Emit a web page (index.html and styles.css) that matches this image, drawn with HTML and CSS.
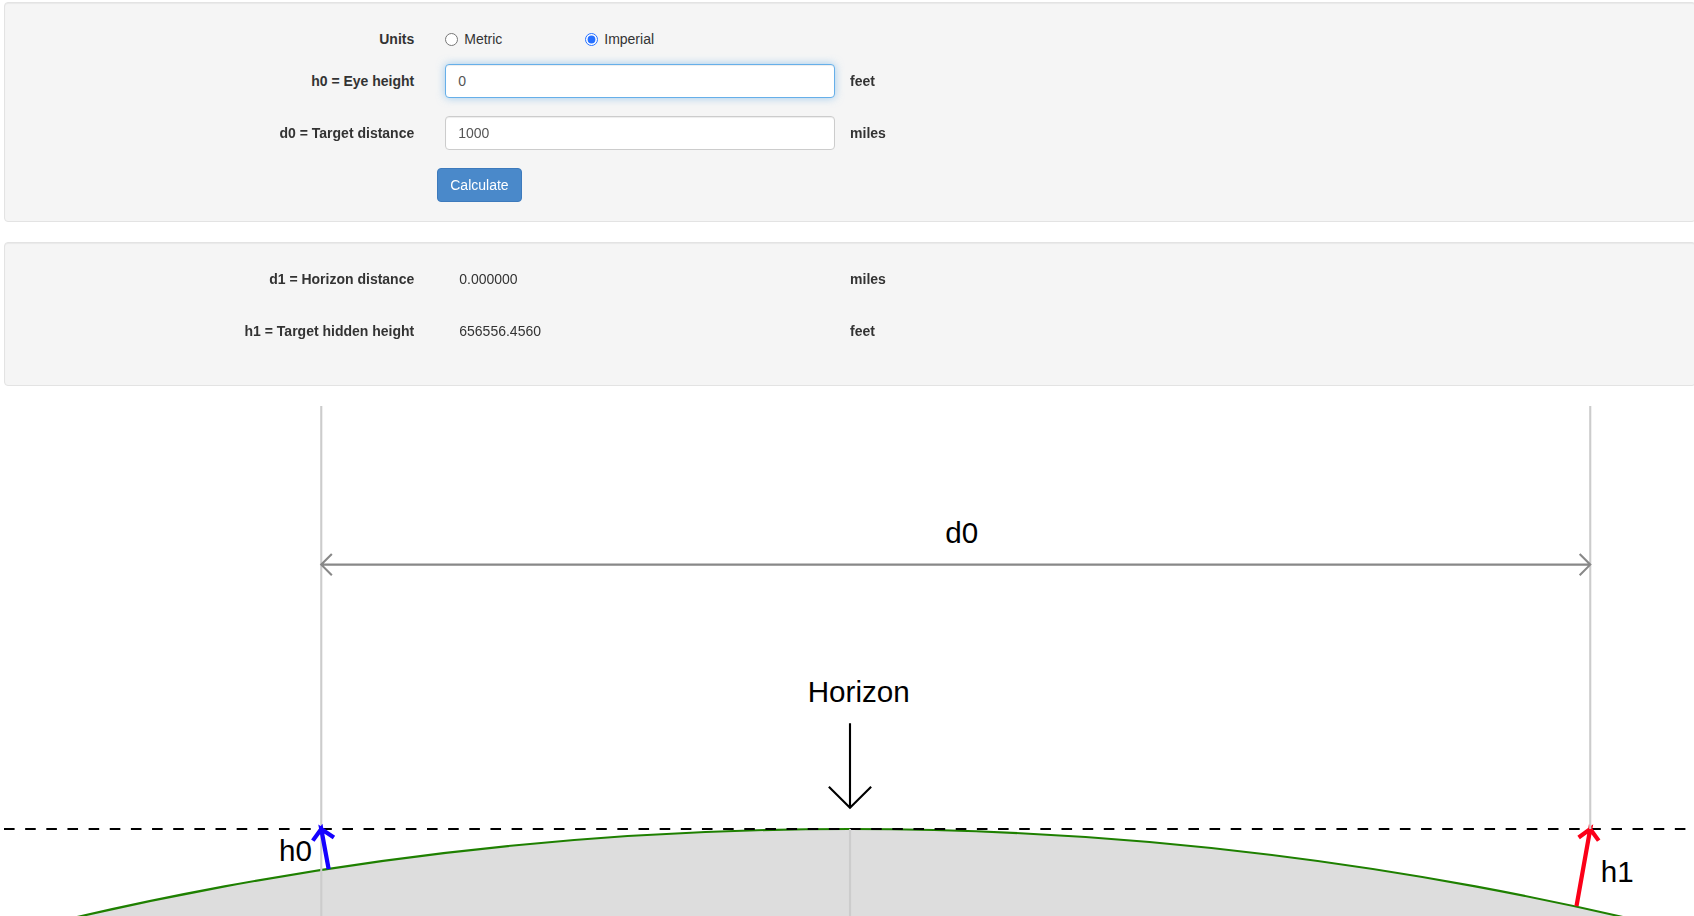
FILE: index.html
```html
<!DOCTYPE html>
<html lang="en">
<head>
    <meta charset="UTF-8">
    <meta name="viewport" content="width=device-width, initial-scale=1.0">
    <title>Earth Curve Calculator</title>
    <link rel="stylesheet" href="styles.css">
</head>
<body>
    <div class="container">
        <form class="well" id="calc">
            <div class="form-row units-row" role="radiogroup" aria-labelledby="units-label">
                <span class="name" id="units-label">Units</span>
                <div class="radios">
                    <label class="radio"><input type="radio" name="units" value="metric"> Metric</label>
                    <label class="radio"><input type="radio" name="units" value="imperial" checked> Imperial</label>
                </div>
            </div>
            <div class="form-row">
                <label class="name" for="h0">h0 = Eye height</label>
                <input class="field" type="text" id="h0" value="0" autocomplete="off">
                <span class="unit short">feet</span>
            </div>
            <div class="form-row">
                <label class="name" for="d0">d0 = Target distance</label>
                <input class="field" type="text" id="d0" value="1000" autocomplete="off">
                <span class="unit long">miles</span>
            </div>
            <div class="form-row">
                <button class="btn" type="submit">Calculate</button>
            </div>
        </form>

        <div class="well results">
            <div class="form-row">
                <label class="name" for="d1">d1 = Horizon distance</label>
                <output class="value" id="d1">0.000000</output>
                <span class="unit long">miles</span>
            </div>
            <div class="form-row">
                <label class="name" for="h1">h1 = Target hidden height</label>
                <output class="value" id="h1">656556.4560</output>
                <span class="unit short">feet</span>
            </div>
        </div>

        <svg class="diagram" viewBox="0 0 1600 483">
            <!-- earth -->
            <circle class="earth" cx="800" cy="3650" r="3250"/>
            <path class="eye-line" d="M0 400H1600"/>

            <!-- hidden height -->
            <path class="target" d="M1487 473L1500 400L1489 408M1487 473L1500 400L1508 411"/>
            <text x="1510" y="450">h1</text>

            <path class="guide" d="M300 0V483M800 400V483M1500 0V400"/>

            <!-- eye height -->
            <path class="eye" d="M307 438L300 400L292 411M307 438L300 400L312 408"/>
            <text x="260" y="430">h0</text>

            <!-- target distance -->
            <path class="distance" d="M300 150H1500M310 140L300 150L310 160M1490 140L1500 150L1490 160"/>
            <text x="890" y="130">d0</text>

            <!-- horizon -->
            <path class="horizon" d="M800 300V380M780 360L800 380L820 360"/>
            <text x="760" y="280">Horizon</text>
        </svg>
    </div>

    <script src="script.js"></script>
</body>
</html>
```
FILE: styles.css
```css
* {
    box-sizing: border-box;
}
html {
    overflow: hidden;
}
body {
    margin: 0;
    font-family: "Helvetica Neue", Helvetica, "Liberation Sans", Arial, sans-serif;
    font-size: 14px;
    line-height: 20px;
    color: #333;
    background-color: #fff;
}
.container {
    margin: 2px -2px 0 4px;
}
.well {
    margin: 0 0 20px;
    padding: 19px;
    background-color: #f5f5f5;
    border: 1px solid #e3e3e3;
    border-radius: 4px;
    box-shadow: inset 0 1px 1px rgba(0, 0, 0, 0.05);
}
.form-row {
    display: grid;
    grid-template-columns: 25.5% 23.6% 1fr;
    align-items: center;
    min-height: 34px;
    margin-bottom: 18px;
}
form .form-row:last-child {
    margin-bottom: 0;
}
.units-row {
    min-height: 0;
    padding-top: 7px;
    margin-bottom: 15px;
}
.name {
    padding-right: 31px;
    font-weight: bold;
    text-align: right;
}
.radios {
    display: flex;
}
.radio {
    display: flex;
    align-items: center;
    gap: 6px;
    width: 140px;
}
.radio input {
    width: 13px;
    height: 13px;
    margin: 0;
    accent-color: #2670ff;
}
.field {
    width: 100%;
    height: 34px;
    padding: 6px 12px;
    font: inherit;
    color: #555;
    background-color: #fff;
    border: 1px solid #ccc;
    border-radius: 4px;
    box-shadow: inset 0 1px 1px rgba(0, 0, 0, 0.075);
}
.field:focus {
    border-color: #66afe9;
    outline: 0;
    box-shadow: inset 0 1px 1px rgba(0, 0, 0, 0.075), 0 0 8px rgba(102, 175, 233, 0.6);
}
.unit {
    padding-left: 15px;
    font-weight: bold;
}
.value {
    padding-left: 14px;
}
.btn {
    grid-column: 2;
    justify-self: start;
    margin-left: -8px;
    padding: 6px 12px;
    font: inherit;
    color: #fff;
    background-color: #4a89ca;
    border: 1px solid #3d7abc;
    border-radius: 4px;
    cursor: pointer;
}
.btn:hover {
    background-color: #3071a9;
}
.diagram {
    display: block;
    width: 100%;
}
.diagram path {
    fill: none;
    stroke-width: 2;
}
.diagram text {
    font-size: 28px;
    fill: #000;
}
.diagram .earth {
    fill: #ddd;
    stroke: #1e8000;
    stroke-width: 2;
}
.diagram .eye-line {
    stroke: #000;
    stroke-dasharray: 10 10;
}
.diagram .guide {
    stroke: #ccc;
}
.diagram .distance {
    stroke: #888;
}
.diagram .horizon {
    stroke: #000;
}
.diagram .eye {
    stroke: #1400ff;
    stroke-width: 4;
}
.diagram .target {
    stroke: #fb0018;
    stroke-width: 4;
}
```
FILE: script.js
```js
const EARTH_RADIUS_KM = 6371;
const KM_PER_MILE = 1.609344;
const METERS_PER_FOOT = 0.3048;

const form = document.getElementById('calc');
const eye = document.getElementById('h0');

function isMetric() {
    return form.elements.units.value === 'metric';
}

function updateUnits() {
    document.querySelectorAll('.unit.short').forEach(el => {
        el.textContent = isMetric() ? 'meters' : 'feet';
    });
    document.querySelectorAll('.unit.long').forEach(el => {
        el.textContent = isMetric() ? 'km' : 'miles';
    });
}

function calculate() {
    const shortUnit = isMetric() ? 0.001 : METERS_PER_FOOT / 1000;
    const longUnit = isMetric() ? 1 : KM_PER_MILE;
    const h0 = parseFloat(eye.value) * shortUnit;
    const d0 = parseFloat(document.getElementById('d0').value) * longUnit;
    const d1 = Math.sqrt(h0 * h0 + 2 * EARTH_RADIUS_KM * h0);
    const rest = d0 - d1;
    const h1 = Math.sqrt(rest * rest + EARTH_RADIUS_KM * EARTH_RADIUS_KM) - EARTH_RADIUS_KM;
    document.getElementById('d1').textContent = (d1 / longUnit).toFixed(6);
    document.getElementById('h1').textContent = (h1 / shortUnit).toFixed(4);
}

form.addEventListener('change', updateUnits);
form.addEventListener('submit', function(e) {
    e.preventDefault();
    calculate();
});

eye.focus();
eye.setSelectionRange(eye.value.length, eye.value.length);
```
